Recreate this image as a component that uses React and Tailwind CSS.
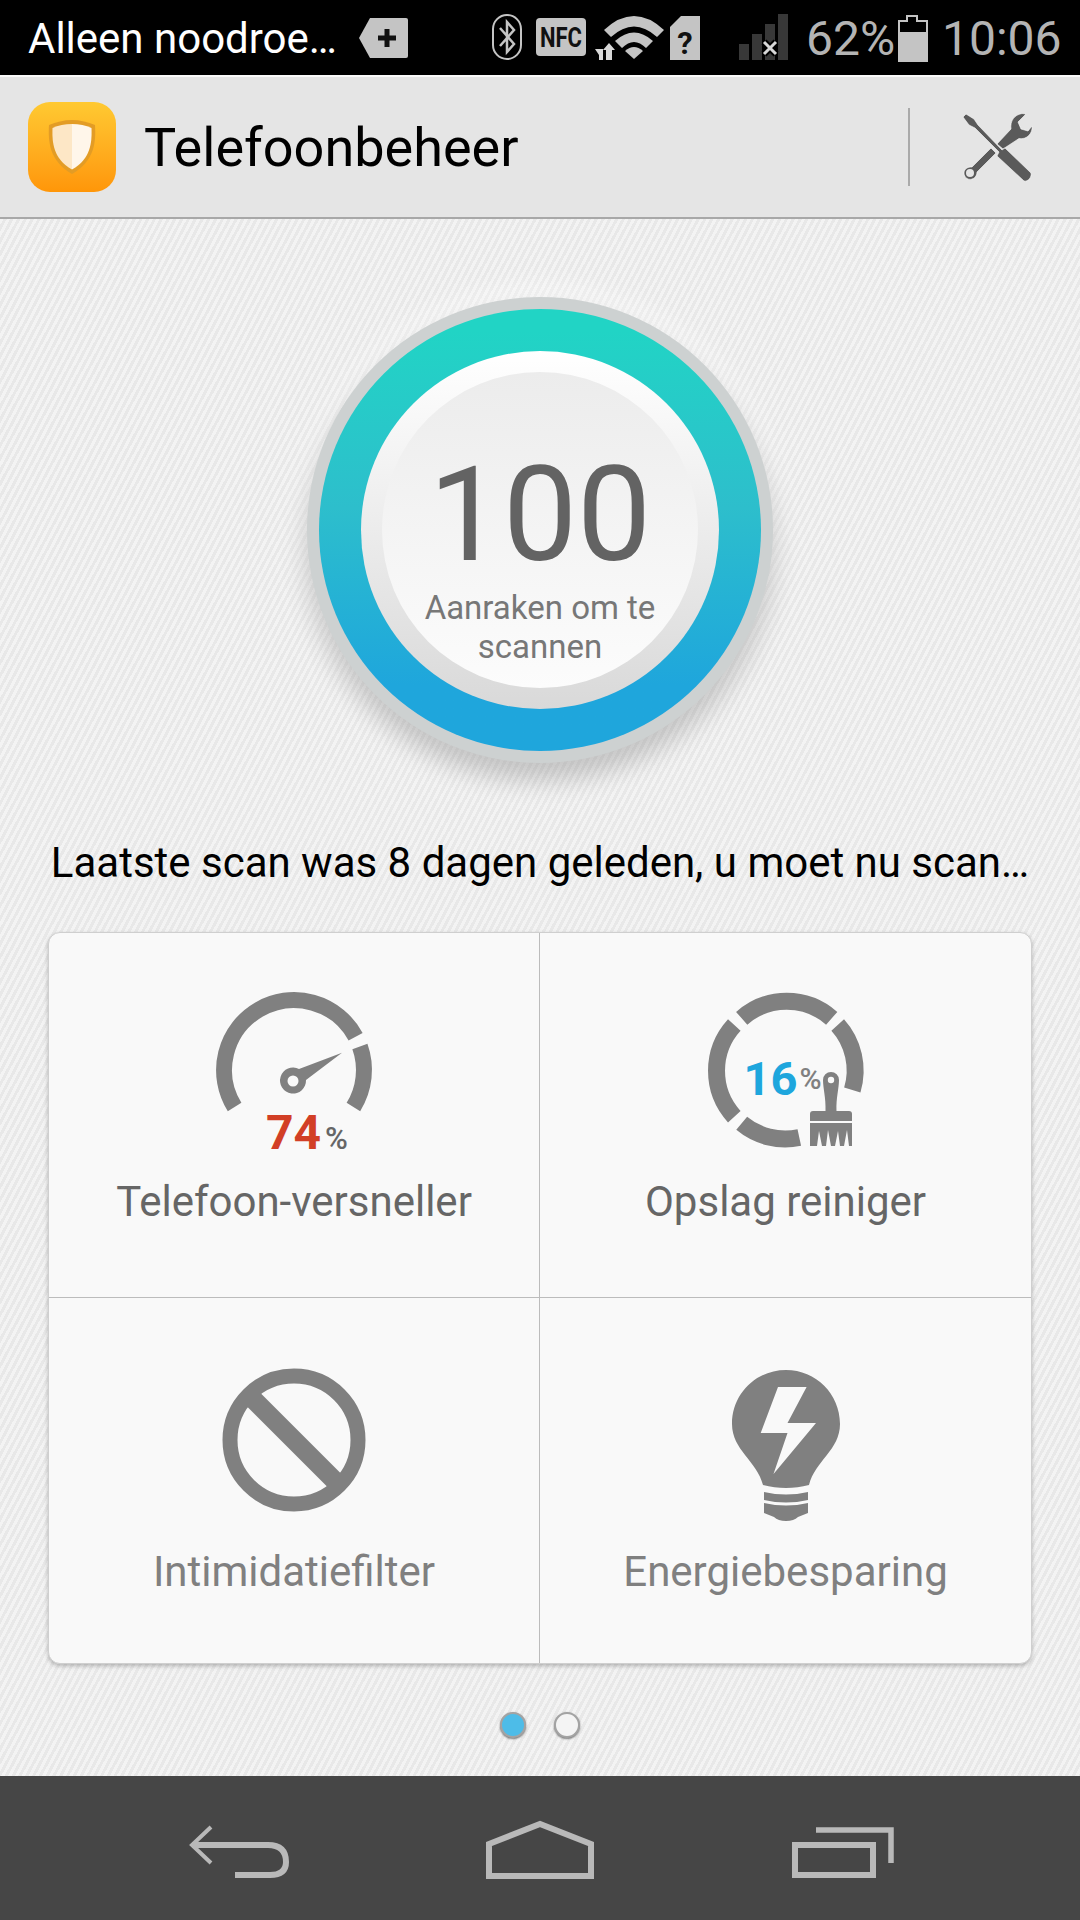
import React from "react";

const roboto = "font-['Roboto',sans-serif]";
const stripes =
  "bg-[repeating-linear-gradient(118deg,#f3f3f3_0px,#f3f3f3_3px,#e8e8e8_3px,#e8e8e8_6px)]";

// status bar icons, drawn in bar coordinates (origin x=490)
function StatusIcons() {
  return (
    <svg width="300" height="75" viewBox="490 0 300 75" className="block">
      <rect x="493" y="15" width="28" height="44" rx="14" fill="none" stroke="#c4c4c4" strokeWidth="2" />
      <path d="M500 28 L514 44 L507 52 L507 22 L514 30 L500 46" fill="none" stroke="#c4c4c4" strokeWidth="2.5" />
      <rect x="536" y="18" width="50" height="38" rx="4" fill="#c4c4c4" />
      <text x="561" y="47" textAnchor="middle" fontSize="28" fontWeight="700" fill="#111" textLength="42" lengthAdjust="spacingAndGlyphs" fontFamily="Roboto, sans-serif">NFC</text>
      <path d="M595 49 h8 v11 h-4 v-5 z" fill="#d8d8d8" />
      <path d="M606 60 v-10 h-3 l6 -7 l6 7 h-3 v10 z" fill="#d8d8d8" />
      <path d="M604 30 Q634 2 664 30 L657 37 Q634 16 611 37 Z" fill="#c4c4c4" />
      <path d="M615 41 Q634 24 653 41 L646 48 Q634 36 622 48 Z" fill="#c4c4c4" />
      <path d="M625 51 Q634 43 643 51 L634 59 Z" fill="#c4c4c4" />
      <path d="M670 27 L681 16 L700 16 L700 60 L670 60 Z" fill="#c4c4c4" />
      <text x="685" y="54" textAnchor="middle" fontSize="31" fontWeight="700" fill="#111" fontFamily="Roboto, sans-serif">?</text>
      <rect x="739" y="44" width="10" height="16" fill="#383838" />
      <rect x="752" y="34" width="10" height="26" fill="#383838" />
      <rect x="765" y="24" width="10" height="36" fill="#383838" />
      <rect x="778" y="14" width="10" height="46" fill="#383838" />
      <path d="M764 42 L776 54 M776 42 L764 54" stroke="#000" strokeWidth="7" />
      <path d="M764 42 L776 54 M776 42 L764 54" stroke="#d8d8d8" strokeWidth="3" />
    </svg>
  );
}

function ShieldLogo() {
  return (
    <div className="w-[88px] h-[90px] rounded-[22px] bg-gradient-to-b from-[#ffc931] to-[#ff9608] flex items-center justify-center">
      <svg width="50" height="56" viewBox="0 0 50 56">
        <path d="M25 1 C33 1 41 3 48 6 C49 22 48 42 25 55 C2 42 1 22 2 6 C9 3 17 1 25 1 Z" fill="#e39c25" />
        <path d="M25 5 C18 5 11 6.500 5.500 9 C5 23 6 40 25 50.500 Z" fill="#fde7c6" />
        <path d="M25 5 C32 5 39 6.500 44.500 9 C45 23 44 40 25 50.500 Z" fill="#fff6ea" />
      </svg>
    </div>
  );
}

function ToolsIcon() {
  return (
    <svg width="100" height="95" viewBox="0 0 100 95" className="block">
      {/* wrench */}
      <path d="M47 44 L61 29 C60 21 64 15 72 13.500 L76 14 L68 22 L71 29 L78 31 L82 26 C83 33 77 40 69 38.500 L53 49 Z" fill="#5a5a5a" stroke="#fff" strokeWidth="0.6" />
      <path d="M41 48 L46 53 L27 72 C27 78 21 81 17 78.500 C13 76 13 70 17 68 C19 67 20 67 22 67 Z" fill="#5a5a5a" stroke="#fff" strokeWidth="0.6" />
      <circle cx="20" cy="73" r="4" fill="#e5e5e5" />
      {/* screwdriver */}
      <path d="M13 17 L16 14 L24 19 L28 25 L52 50 L55 48 L81 73 C82 77 78 82 74 81 L47 56 L49 52 L25 28 L19 25 Z" fill="#5a5a5a" stroke="#fff" strokeWidth="0.6" />
    </svg>
  );
}

// gauge + percentage
function SpeedIcon() {
  return (
    <div className="relative w-[200px] h-[180px]">
      <svg width="200" height="180" viewBox="-5 0 200 180" className="block">
        <path d="M35.600 127 A70 70 0 1 1 156.600 56.700" fill="none" stroke="#808080" strokeWidth="16" />
        <path d="M160.900 66.500 A70 70 0 0 1 154.400 127" fill="none" stroke="#808080" strokeWidth="16" />
        <path d="M100 89 L143 72.700 L107 100 A13 13 0 1 1 100 89 Z" fill="#808080" />
        <circle cx="94" cy="101" r="5.500" fill="#f9f9f9" />
      </svg>
      <div className={`absolute left-[72px] top-[129px] flex items-baseline leading-none ${roboto}`}>
        <span className="text-[48px] font-bold text-[#d23f26]">74</span>
        <span className="ml-[4px] text-[31px] font-medium text-[#666666]">%</span>
      </div>
    </div>
  );
}

function CleanIcon() {
  return (
    <div className="relative w-[200px] h-[180px]">
      <svg width="200" height="180" viewBox="-4 0 200 180" className="block">
        <g fill="none" stroke="#808080" strokeWidth="17">
          <path d="M51.700 38.300 A68 68 0 0 1 141.700 38.300" />
          <path d="M147.700 45 A68 68 0 0 1 162.300 110" />
          <path d="M44.300 45 A68 68 0 0 0 44.300 136.700" />
          <path d="M51.700 143.300 A68 68 0 0 0 109.300 157.500" />
        </g>
        <path d="M133 100 A8 8 0 1 1 149 100 C149 108 146 118 146.500 131 H135.500 C136 118 133 108 133 100 Z" fill="#808080" />
        <circle cx="141" cy="100" r="3.200" fill="#f9f9f9" />
        <path d="M120 141 V134 Q120 131 123 131 H159 Q162 131 162 134 V141 Z" fill="#808080" />
        <path d="M120 143 H162 V166 H159 L157 150 L154 166 H150 L148 151 L145 166 H141 L138 150 L136 166 H132 L129 151 L127 166 H120 Z" fill="#808080" />
      </svg>
      <div className={`absolute left-[58px] top-[75px] flex items-start leading-none ${roboto}`}>
        <span className="text-[47px] font-bold text-[#1ea6dd]">16</span>
        <span className="ml-[2px] mt-[9px] text-[30px] font-medium text-[#808080]">%</span>
      </div>
    </div>
  );
}

function BlockIcon() {
  return (
    <svg width="200" height="180" viewBox="0 0 200 180" className="block">
      <circle cx="100" cy="95" r="64" fill="none" stroke="#808080" strokeWidth="15" />
      <path d="M55 50 L145 140" stroke="#808080" strokeWidth="19" />
    </svg>
  );
}

function BulbIcon() {
  return (
    <svg width="200" height="180" viewBox="0 0 200 180" className="block">
      <path d="M100 25 C130 25 154 49 154 79 C154 105 129 116 123 140 C108 144 92 144 77 140 C71 116 46 105 46 79 C46 49 70 25 100 25 Z" fill="#808080" />
      <path d="M92 42 L120.600 42 L101.500 78 L130 78 L87.500 129 L101.500 88 L74.700 88 Z" fill="#f9f9f9" />
      <path d="M78 147 Q100 152 122 147 V155 Q100 160 78 155 Z" fill="#808080" />
      <path d="M78 158 Q100 163 122 158 V168 L112 172 Q108 176 100 176 Q92 176 88 172 L78 168 Z" fill="#808080" />
    </svg>
  );
}

function NavIcons() {
  return (
    <svg width="1080" height="144" viewBox="0 1776 1080 144" className="block">
      <g fill="none" stroke="#b9b9b9">
        <path d="M211 1827 L192 1845 L211 1863" strokeWidth="4" />
        <path d="M192 1845 H268 Q286 1845 286 1862 Q286 1875 270 1875 H235" strokeWidth="6" />
        <path d="M489 1876 V1844 L540 1824 L591 1844 V1876 Z" strokeWidth="6" />
        <path d="M816 1830 H891 V1863" strokeWidth="5.500" />
        <path d="M795 1845 H873 V1875 H795 Z" strokeWidth="6" />
      </g>
    </svg>
  );
}

function Cell({ icon, label, labelClass, extra, top }) {
  return (
    <div className={`flex flex-col items-center ${extra}`}>
      <div className="pt-[47px]">{icon}</div>
      <div className={`${top} text-[42px] leading-[50px] ${roboto} ${labelClass}`}>{label}</div>
    </div>
  );
}

export default function App() {
  return (
    <div className={`w-[1080px] h-[1920px] flex flex-col overflow-hidden ${roboto}`}>
      {/* status bar */}
      <div className="h-[75px] bg-black flex items-center pl-[28px] shrink-0">
        <span className="mt-[2px] w-[312px] text-[42px] leading-none text-white whitespace-nowrap">Alleen noodroe…</span>
        <svg width="52" height="42" viewBox="0 0 52 42" className="ml-[18px] shrink-0">
          <path d="M12 1 H48 Q50 1 50 3 V39 Q50 41 48 41 H12 L1 21 Z" fill="#c4c4c4" />
          <path d="M29 12 V30 M20 21 H38" stroke="#111" strokeWidth="5" />
        </svg>
        <div className="ml-[80px] shrink-0">
          <StatusIcons />
        </div>
        <span className="mt-[3px] ml-[16px] w-[91px] text-[48px] leading-none text-[#b4b4b4]">62%</span>
        <svg width="32" height="48" viewBox="0 0 32 48" className="shrink-0">
          <path d="M10 2 H20 V7 H30 V47 H2 V7 H10 Z" fill="none" stroke="#c4c4c4" strokeWidth="2" />
          <rect x="1" y="18" width="30" height="30" fill="#c4c4c4" />
        </svg>
        <span className="mt-[3px] ml-[13px] text-[48px] leading-none text-[#b4b4b4]">10:06</span>
      </div>

      {/* app header */}
      <div className="h-[144px] shrink-0 border-t-2 border-t-[#fafafa] border-b-2 border-b-[#a8a8a8] bg-[#e5e5e5] flex items-center pl-[28px]">
        <ShieldLogo />
        <h1 className="mt-[2px] ml-[28px] text-[54px] leading-none font-normal text-black">Telefoonbeheer</h1>
        <div className="ml-auto w-[2px] h-[78px] bg-[#aaaaaa]" />
        <div className="ml-[40px] mr-[30px]">
          <ToolsIcon />
        </div>
      </div>

      {/* scan content */}
      <main className={`flex-1 flex flex-col items-center pt-[78px] ${stripes}`}>
        <div className="w-[466px] h-[466px] rounded-full bg-[#cdd1d1] flex items-center justify-center shadow-[0_16px_26px_rgba(0,0,0,0.2),0_-4px_30px_rgba(255,255,255,0.7)] shrink-0">
          <div className="w-[442px] h-[442px] rounded-full bg-gradient-to-b from-[#21d4c5] from-5% via-[#2dbecc] via-45% to-[#1fa6dc] to-85% flex items-center justify-center">
            <div className="w-[358px] h-[358px] rounded-full bg-gradient-to-b from-[#ffffff] to-[#d9d9d9] flex items-center justify-center">
              <div className="w-[316px] h-[316px] rounded-full bg-gradient-to-b from-[#ececec] to-[#fcfcfc] flex flex-col items-center pt-[77px]">
                <span className="text-[132px] leading-[132px] text-[#636363]">100</span>
                <span className="mt-[7px] w-[280px] text-center text-[33px] leading-[39px] text-[#777777]">
                  Aanraken om te scannen
                </span>
              </div>
            </div>
          </div>
        </div>

        <p className="mt-[75px] w-[984px] text-center text-[42px] leading-[50px] text-black whitespace-nowrap">
          Laatste scan was 8 dagen geleden, u moet nu scan…
        </p>

        <div className="mt-[44px] w-[984px] h-[732px] rounded-[12px] border border-[#cfcfcf] bg-[#f9f9f9] grid grid-cols-2 grid-rows-2 shadow-[0_2px_4px_rgba(0,0,0,0.25)] shrink-0">
          <Cell icon={<SpeedIcon />} label="Telefoon-versneller" labelClass="text-[#666666]" top="mt-[17px]" extra="border-r border-b border-[#bcbcbc]" />
          <Cell icon={<CleanIcon />} label="Opslag reiniger" labelClass="text-[#666666]" top="mt-[17px]" extra="border-b border-[#bcbcbc]" />
          <Cell icon={<BlockIcon />} label="Intimidatiefilter" labelClass="text-[#808080]" top="mt-[22px]" extra="border-r border-[#bcbcbc]" />
          <Cell icon={<BulbIcon />} label="Energiebesparing" labelClass="text-[#808080]" top="mt-[22px]" extra="" />
        </div>

        {/* pager dots */}
        <div className="mt-[48px] flex gap-[28px]">
          <div className="w-[26px] h-[26px] rounded-full bg-[#4dbce8] border-[2px] border-[#a3a3a3] shadow-[0_1px_2px_rgba(0,0,0,0.5)]" />
          <div className="w-[26px] h-[26px] rounded-full bg-[#f4f4f4] border-[2px] border-[#a3a3a3] shadow-[0_1px_2px_rgba(0,0,0,0.5)]" />
        </div>
      </main>

      {/* nav bar */}
      <div className="h-[144px] shrink-0 bg-[#464646]">
        <NavIcons />
      </div>
    </div>
  );
}
